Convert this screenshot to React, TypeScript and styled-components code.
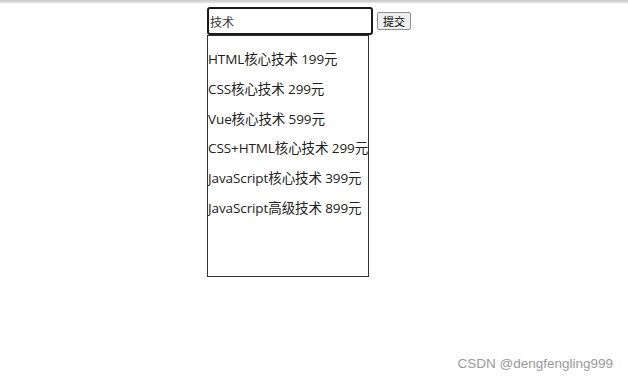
import React from 'react';
import styled, { createGlobalStyle } from 'styled-components';

const GlobalStyle = createGlobalStyle({
  'html, body': {
    margin: 0,
    padding: 0,
    background: '#fff',
  },
  body: {
    fontFamily: '"Open Sans", "Noto Sans CJK SC", sans-serif',
    color: '#000',
  },
});

const Page = styled.div({
  position: 'relative',
  width: '628px',
  height: '380px',
  overflow: 'hidden',
});

const TopEdge = styled.div({
  height: '3px',
  background: 'linear-gradient(#c8c8c8, #e6e6e6)',
});

const Search = styled.div({
  paddingTop: '4px',
  paddingLeft: '207px',
});

const Bar = styled.div({
  display: 'flex',
  alignItems: 'center',
  gap: '4px',
});

const Field = styled.input({
  boxSizing: 'border-box',
  width: '166px',
  height: '28px',
  padding: '0 1px',
  border: '2px solid #1a1a1a',
  borderRadius: '3px',
  outline: 'none',
  fontSize: '12px',
  fontFamily: '"Noto Sans CJK SC", sans-serif',
  color: '#333',
  caretColor: '#000',
});

const Submit = styled.button({
  boxSizing: 'border-box',
  width: '34px',
  height: '18px',
  padding: 0,
  border: '1px solid #8f8f8f',
  borderRadius: '2px',
  background: '#efefef',
  fontSize: '11px',
  fontFamily: '"Noto Sans CJK SC", sans-serif',
  lineHeight: '16px',
  color: '#000',
});

const Suggestions = styled.div({
  boxSizing: 'border-box',
  width: '162px',
  height: '242px',
  paddingTop: '2px',
  border: '1px solid #333',
  overflow: 'hidden',
});

const Item = styled.p({
  margin: '14px 0',
  fontSize: '13.5px',
  lineHeight: '15.8px',
  whiteSpace: 'nowrap',
  color: '#222',
  letterSpacing: '-0.1px',
});

const Watermark = styled.div({
  position: 'absolute',
  right: '15px',
  bottom: '9px',
  fontFamily: '"Liberation Sans", sans-serif',
  fontSize: '13.5px',
  color: '#9a9a9a',
});

const courses = [
  'HTML核心技术 199元',
  'CSS核心技术 299元',
  'Vue核心技术 599元',
  'CSS+HTML核心技术 299元',
  'JavaScript核心技术 399元',
  'JavaScript高级技术 899元',
];

const App = () => (
  <Page>
    <GlobalStyle />
    <TopEdge />
    <Search>
      <Bar>
        <Field defaultValue="技术" autoFocus />
        <Submit>提交</Submit>
      </Bar>
      <Suggestions>
        {courses.map((course) => (
          <Item key={course}>{course}</Item>
        ))}
      </Suggestions>
    </Search>
    <Watermark>CSDN @dengfengling999</Watermark>
  </Page>
);

export default App;
